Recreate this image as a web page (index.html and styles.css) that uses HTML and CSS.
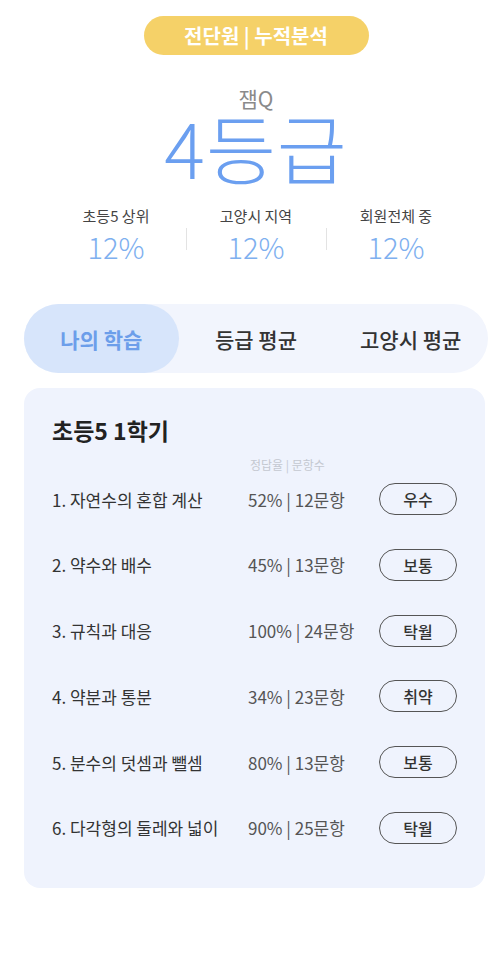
FILE: index.html
```html
<!doctype html>
<html>
<head>
  <meta charset="utf-8">
  <link rel="stylesheet" href="styles.css">
</head>
<body>
  <div class="page">
    <div class="topPill">전단원 | 누적분석</div>

    <div class="gradeBox">
      <div class="gradeName">잼Q</div>
      <div class="grade">4등급</div>
    </div>

    <div class="stats">
      <div class="stat">
        <div class="statLabel">초등5 상위</div>
        <div class="statValue">12%</div>
      </div>
      <div class="stat">
        <div class="statLabel">고양시 지역</div>
        <div class="statValue">12%</div>
      </div>
      <div class="stat">
        <div class="statLabel">회원전체 중</div>
        <div class="statValue">12%</div>
      </div>
    </div>

    <div class="tabs">
      <button class="tab active">나의 학습</button>
      <button class="tab">등급 평균</button>
      <button class="tab">고양시 평균</button>
    </div>

    <div class="card">
      <h2 class="cardTitle">초등5 1학기</h2>
      <div class="colHead">정답율 | 문항수</div>
      <div id="rows" class="rows"></div>
    </div>
  </div>

  <script>
    var units = [
      ['1. 자연수의 혼합 계산', '52% | 12문항', '우수'],
      ['2. 약수와 배수', '45% | 13문항', '보통'],
      ['3. 규칙과 대응', '100% | 24문항', '탁월'],
      ['4. 약분과 통분', '34% | 23문항', '취약'],
      ['5. 분수의 덧셈과 뺄셈', '80% | 13문항', '보통'],
      ['6. 다각형의 둘레와 넓이', '90% | 25문항', '탁월']
    ];

    var markup = "";
    for(var i = 0; i < units.length; i++){
      markup += "<div class='row'>"
        + "<div class='unitName'>" + units[i][0] + "</div>"
        + "<div class='unitStat'>" + units[i][1] + "</div>"
        + "<div class='badge'>" + units[i][2] + "</div>"
        + "</div>";
    }
    document.getElementById("rows").innerHTML = markup;
  </script>
</body>
</html>
```

FILE: styles.css
```css
body{
  margin: 0;
  background-color: #ffffff;
  font-family: "Noto Sans CJK KR", "Noto Sans", sans-serif;
  color: #333333;
}
.page{
  padding: 16px 12px 80px 24px;
  display: flex;
  flex-direction: column;
  align-items: center;
}
.topPill{
  width: 225px;
  height: 39px;
  border-radius: 20px;
  background-color: #f5d168;
  color: #ffffff;
  font-size: 20px;
  font-weight: 700;
  display: flex;
  align-items: center;
  justify-content: center;
}
.gradeBox{
  margin-top: 31px;
  text-align: center;
}
.gradeName{
  font-size: 21px;
  line-height: 24px;
  color: #8a8a8a;
}
.grade{
  margin-top: -1px;
  font-size: 76px;
  line-height: 74px;
  font-weight: 300;
  color: #6b9ff0;
  letter-spacing: 1px;
}
.stats{
  margin-top: 23px;
  display: grid;
  grid-template-columns: 140px 140px 140px;
}
.stat{
  text-align: center;
  position: relative;
}
.stat + .stat::before{
  content: "";
  position: absolute;
  left: 0;
  top: 22px;
  height: 22px;
  border-left: 1px solid #e3e3e3;
}
.statLabel{
  font-size: 15px;
  line-height: 20px;
  color: #444444;
}
.statValue{
  margin-top: 2px;
  font-size: 29px;
  line-height: 36px;
  font-weight: 300;
  color: #7eb0ef;
}
.tabs{
  margin-top: 40px;
  align-self: stretch;
  display: grid;
  grid-template-columns: 1fr 1fr 1fr;
  height: 69px;
  border-radius: 35px;
  background-color: #f2f5fd;
}
.tab{
  border: none;
  background: none;
  border-radius: 35px;
  font-family: inherit;
  font-size: 21px;
  font-weight: 500;
  color: #333333;
  padding: 0;
}
.tab.active{
  background-color: #d7e5fb;
  color: #6c9eea;
  font-weight: 700;
}
.card{
  margin-top: 15px;
  align-self: stretch;
  margin-right: 3px;
  background-color: #eff3fd;
  border-radius: 16px;
  padding: 27px 28px 44px 28px;
}
.cardTitle{
  margin: 0;
  font-size: 23px;
  line-height: 30px;
  font-weight: 700;
  color: #222222;
}
.colHead{
  margin-top: 12px;
  padding-left: 198px;
  font-size: 12px;
  line-height: 16px;
  color: #c4c8d0;
}
.rows{
  margin-top: 10px;
  display: flex;
  flex-direction: column;
  gap: 33.8px;
}
.row{
  display: grid;
  grid-template-columns: 196px 131px 78px;
  align-items: center;
  height: 32px;
}
.unitName{
  font-size: 17px;
  color: #333333;
  white-space: nowrap;
}
.unitStat{
  font-size: 17px;
  color: #555555;
  white-space: nowrap;
}
.badge{
  height: 30px;
  border: 1.5px solid #555555;
  border-radius: 16px;
  display: flex;
  align-items: center;
  justify-content: center;
  font-size: 16px;
  font-weight: 500;
  color: #333333;
}
```
